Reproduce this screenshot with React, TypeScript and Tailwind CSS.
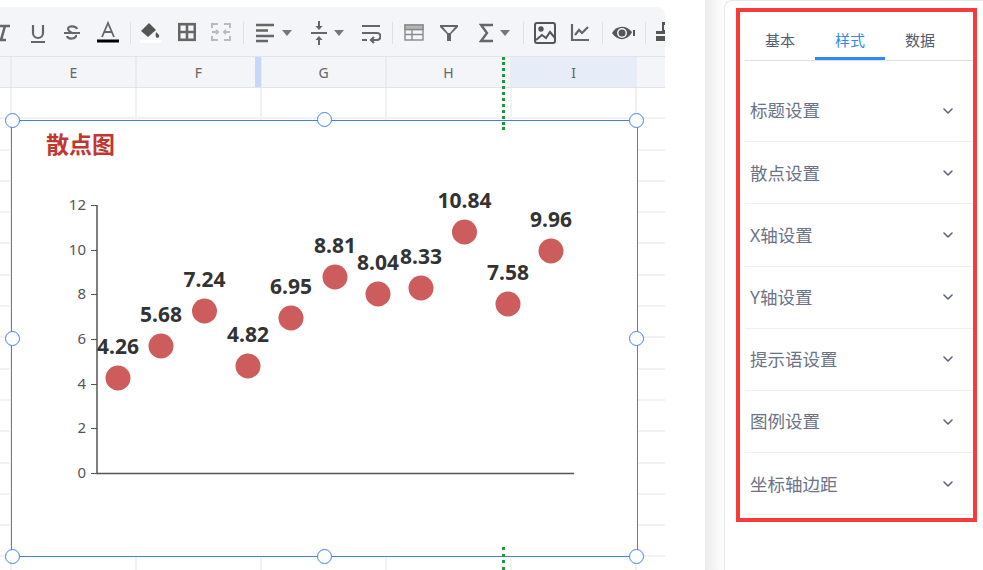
import { ChevronDown } from "lucide-react";
import type { ReactNode } from "react";

const FONT = "font-['Noto_Sans','Noto_Sans_CJK_SC',sans-serif]";

const points = [
  { x: 118, y: 377, v: "4.26" },
  { x: 161, y: 345, v: "5.68" },
  { x: 204.5, y: 310, v: "7.24" },
  { x: 248, y: 365, v: "4.82" },
  { x: 291, y: 317, v: "6.95" },
  { x: 335, y: 276, v: "8.81" },
  { x: 378, y: 293, v: "8.04" },
  { x: 421, y: 287, v: "8.33" },
  { x: 464.5, y: 231, v: "10.84" },
  { x: 508, y: 303, v: "7.58" },
  { x: 551, y: 250, v: "9.96" },
];

const ticks = [
  { y: 204, t: "12" },
  { y: 249, t: "10" },
  { y: 293, t: "8" },
  { y: 338, t: "6" },
  { y: 383, t: "4" },
  { y: 427, t: "2" },
  { y: 472, t: "0" },
];

const settings = ["标题设置", "散点设置", "X轴设置", "Y轴设置", "提示语设置", "图例设置", "坐标轴边距"];

const Icon = ({ children, w = 20 }: { children: ReactNode; w?: number }) => (
  <svg width={w} height="24" viewBox={`0 0 ${w} 24`} fill="none" stroke="#666" strokeWidth="2.2">
    {children}
  </svg>
);

const Caret = ({ gap }: { gap: string }) => (
  <svg width="10" height="6" viewBox="0 0 10 6" className={gap}>
    <path d="M0 0h10L5 6z" fill="#777" />
  </svg>
);

const Divider = () => <div className="h-[22px] w-px shrink-0 bg-[#dfe0e3]" />;

const Btn = ({ className, children }: { className: string; children?: ReactNode }) => (
  <div className={`flex shrink-0 items-center justify-center ${className}`}>{children}</div>
);

function Toolbar() {
  return (
    <div className="flex h-[50px] items-center overflow-hidden rounded-tr-lg border-b border-[#e2e3e6] bg-[#f4f5f8] pt-[2px]">
      <Btn className="-ml-[14px] w-[34px]">
        <Icon w={16}>
          <path d="M3 5h12M10 5 6 19M1 19h10" strokeWidth="2.6" />
        </Icon>
      </Btn>
      <Btn className="w-[36px]">
        <Icon w={16}>
          <path d="M3 4v8a5 5 0 0 0 10 0V4M1 21h14" />
        </Icon>
      </Btn>
      <Btn className="w-[32px]">
        <Icon w={18}>
          <path d="M14 8c-1-3-9-4-9 0 0 2 3 3 4 4M13 14c1 4-8 5-9 1M1 12h16" />
        </Icon>
      </Btn>
      <Btn className="w-[42px] pr-[2px]">
        <svg width="22" height="24" viewBox="0 0 22 24" fill="none">
          <path d="M5 16 11 2l6 14M7 11h8" stroke="#666" strokeWidth="1.8" />
          <rect y="18.5" width="22" height="3" fill="#000" />
        </svg>
      </Btn>
      <Divider />
      <Btn className="w-[40px]">
        <svg width="22" height="24" viewBox="0 0 22 24">
          <path d="M9 2 1 10l7 6 8-7z" fill="#555" />
          <path d="M16 11c2 2 4 3 3 5a2 2 0 0 1-3 0c-1-2 0-3 0-5z" fill="#555" />
          <rect y="19" width="22" height="3" fill="#fff" />
        </svg>
      </Btn>
      <Btn className="w-[32px]">
        <Icon w={18}>
          <rect x="1.2" y="3.2" width="15.6" height="15.6" strokeWidth="2.6" />
          <path d="M9 3v16M1 11h16" strokeWidth="2.6" />
        </Icon>
      </Btn>
      <Btn className="w-[36px]">
        <svg width="20" height="24" viewBox="0 0 20 24" fill="none" stroke="#b9bbbf" strokeWidth="2">
          <path d="M1 7V3h6M13 3h6v4M1 15v4h6M13 19h6v-4M1 11h6M13 11h6" />
          <path d="m5 9 2 2-2 2M15 9l-2 2 2 2" />
        </svg>
      </Btn>
      <Btn className="w-[4px]" />
      <Divider />
      <Btn className="w-[60px]">
        <div className="flex items-center">
          <Icon w={18}>
            <path d="M0 4h18M0 9.500h12M0 15h18M0 20h12" strokeWidth="2.4" />
          </Icon>
          <Caret gap="ml-[8px]" />
        </div>
      </Btn>
      <Btn className="w-[47px]">
        <div className="flex items-center">
          <svg width="16" height="24" viewBox="0 0 16 24" fill="#666">
            <path d="M0 11h16v2H0z" />
            <path d="M8 9 4.500 5H7V0h2v5h2.500zM8 15l3.500 4H9v5H7v-5H4.500z" />
          </svg>
          <Caret gap="ml-[7px]" />
        </div>
      </Btn>
      <Btn className="w-[40px]">
        <Icon w={20}>
          <path d="M1 5h18M1 12h15a3 3 0 0 1 0 7h-5M13 16l-3 3 3 3M1 19h5" />
        </Icon>
      </Btn>
      <Btn className="w-px" />
      <Divider />
      <Btn className="w-[42px]">
        <svg width="20" height="18" viewBox="0 0 20 18" fill="none" stroke="#8a8a8a" strokeWidth="1.4">
          <rect x="1" y="1" width="18" height="15" />
          <path d="M1 5.500h18M1 10.500h18M8 5.500v10.500" />
          <rect x="1" y="1" width="18" height="4.500" fill="#b5b5b5" />
        </svg>
      </Btn>
      <Btn className="w-[28px]">
        <svg width="18" height="18" viewBox="0 0 18 18">
          <path d="M0 1h18v2l-7 7v7H7v-7L0 3zM3 3l5 6h2l5-6z" fill="#666" fillRule="evenodd" />
        </svg>
      </Btn>
      <Btn className="w-[60px] pl-[3px]">
        <div className="flex items-center">
          <svg width="14" height="20" viewBox="0 0 14 20" fill="none" stroke="#666" strokeWidth="2.4">
            <path d="M14 2H2l6 8-6 8h12" />
          </svg>
          <Caret gap="ml-[7px]" />
        </div>
      </Btn>
      <Divider />
      <Btn className="w-[42px]">
        <svg width="22" height="22" viewBox="0 0 22 22" fill="none" stroke="#555" strokeWidth="2">
          <rect x="1" y="1" width="20" height="20" rx="2" />
          <circle cx="7" cy="7" r="1.700" fill="#555" />
          <path d="m2 18 6-5 4 3 4-6 5 6" />
        </svg>
      </Btn>
      <Btn className="w-[36px] pr-[8px]">
        <Icon w={20}>
          <path d="M2 3v16h17M5 14l4-5 3 3 6-6" />
        </Icon>
      </Btn>
      <Divider />
      <Btn className="w-[42px]">
        <svg width="24" height="18" viewBox="0 0 24 18">
          <path d="M0 9c5-8 14-8 20-1l-1 2c-5 7-14 7-19-1z" fill="#555" />
          <circle cx="10" cy="9" r="5" fill="#f4f5f8" />
          <circle cx="10" cy="9" r="3.500" fill="#555" />
          <path d="M21 6h2v6h-2z" fill="#555" />
        </svg>
      </Btn>
      <Divider />
      <Btn className="w-[30px] justify-start pl-[10px]">
        <svg width="18" height="22" viewBox="0 0 18 22" fill="#555" className="shrink-0">
          <path d="M6 0h5v3H8v5h3v4H0V9h6zM0 14h18v5H0z" />
        </svg>
      </Btn>
    </div>
  );
}

const columns = ["E", "F", "G", "H", "I"];

function ColumnHeader() {
  return (
    <div className="flex h-[31px] border-b border-[#e2e3e6] bg-[#f4f5f8] text-[14px] text-[#666]">
      <div className="w-[12px] shrink-0 border-r-2 border-[#ebecef]" />
      {columns.map((c) => (
        <div
          key={c}
          className={`relative flex w-[125px] shrink-0 items-center justify-center border-r-2 border-[#ebecef] ${c === "I" ? "bg-[#e6ecf8]" : ""}`}
        >
          {c}
          {c === "F" && <div className="absolute -right-[1px] top-0 h-full w-[6px] bg-[#c6d8f8]" />}
        </div>
      ))}
    </div>
  );
}

function Cells() {
  return (
    <div>
      {Array.from({ length: 16 }).map((_, r) => (
        <div key={r} className="flex h-[31.3px] border-b-2 border-[#f1f2f3]">
          <div className="w-[12px] shrink-0 border-r-2 border-[#f1f2f3]" />
          {columns.map((c) => (
            <div key={c} className="w-[125px] shrink-0 border-r-2 border-[#f1f2f3]" />
          ))}
        </div>
      ))}
    </div>
  );
}

const Handle = ({ className }: { className: string }) => (
  <div className={`absolute h-[15px] w-[15px] rounded-full border-[1.5px] border-[#3f83f0] bg-white ${className}`} />
);

function ChartObject() {
  return (
    <div className="absolute left-[11px] top-[120px] h-[437px] w-[627px]">
      <div className="h-full w-full border border-[#3f7fee] bg-white">
        <svg width="625" height="435" viewBox="12 120 625 435" className="block">
          <text x="46" y="152" fontSize="23" fontWeight="700" fill="#c23531">
            散点图
          </text>
          <path d="M97 204v268.500H574" fill="none" stroke="#555" strokeWidth="1.500" />
          {ticks.map((t) => (
            <g key={t.t}>
              <path d={`M91 ${t.y + 0.5}h6`} stroke="#555" strokeWidth="1" />
              <text x="86" y={t.y + 4.5} textAnchor="end" fontSize="15" fill="#555">
                {t.t}
              </text>
            </g>
          ))}
          {points.map((p) => (
            <g key={p.v}>
              <circle cx={p.x} cy={p.y} r="12.500" fill="#cd5c5c" />
              <text x={p.x} y={p.y - 24} textAnchor="middle" fontSize="21" fontWeight="700" fill="#333">
                {p.v}
              </text>
            </g>
          ))}
        </svg>
      </div>
      <Handle className="-left-[6px] -top-[7px]" />
      <Handle className="left-[306px] -top-[8px]" />
      <Handle className="-right-[6px] -top-[7px]" />
      <Handle className="-left-[6px] top-[211px]" />
      <Handle className="-right-[6px] top-[211px]" />
      <Handle className="-bottom-[7px] -left-[6px]" />
      <Handle className="-bottom-[7px] left-[306px]" />
      <Handle className="-bottom-[7px] -right-[6px]" />
    </div>
  );
}

function Sheet() {
  return (
    <div className="relative h-[570px] w-[665px] shrink-0 overflow-hidden pt-[7px]">
      <Toolbar />
      <ColumnHeader />
      <Cells />
      <ChartObject />
      <div className="absolute left-[502px] top-[57px] h-[73px] border-l-[3px] border-dotted border-[#1a9a3c]" />
      <div className="absolute bottom-0 left-[502px] h-[23px] border-l-[3px] border-dotted border-[#1a9a3c]" />
    </div>
  );
}

function SidePanel() {
  return (
    <div className="ml-[40px] flex h-[570px] flex-1">
      <div className="w-[19px] shrink-0 bg-gradient-to-r from-[#ececec] to-white" />
      <div className="flex-1 rounded-tl-lg border-l border-t border-[#e8e8e8] pl-[11px] pt-[7px]">
        <div className="h-[514px] w-[241px] border-[4px] border-[#f83a3a] pl-[5px]">
          <div className="flex h-[49px] border-b border-[#e0e0e0] text-[15px]">
            <div className="flex w-[70px] items-center justify-center pt-[8px] text-[#515a6e]">基本</div>
            <div className="flex w-[70px] items-center justify-center border-b-[3px] border-[#2d8cf0] pt-[11px] text-[#2d8cf0]">
              样式
            </div>
            <div className="flex w-[70px] items-center justify-center pt-[8px] text-[#515a6e]">数据</div>
          </div>
          <div className="pt-[19px]">
            {settings.map((s) => (
              <div key={s} className="flex h-[62.2px] items-center border-b border-[#eeeeee] pl-[5px] text-[17.5px] text-[#6b7388]">
                <span className="flex-1">{s}</span>
                <ChevronDown className="mr-[17px] h-[16px] w-[16px] text-[#5d6579]" strokeWidth={2.4} />
              </div>
            ))}
          </div>
        </div>
      </div>
    </div>
  );
}

export default function App() {
  return (
    <div className={`flex h-[570px] w-[983px] overflow-hidden bg-white ${FONT}`}>
      <Sheet />
      <SidePanel />
    </div>
  );
}
